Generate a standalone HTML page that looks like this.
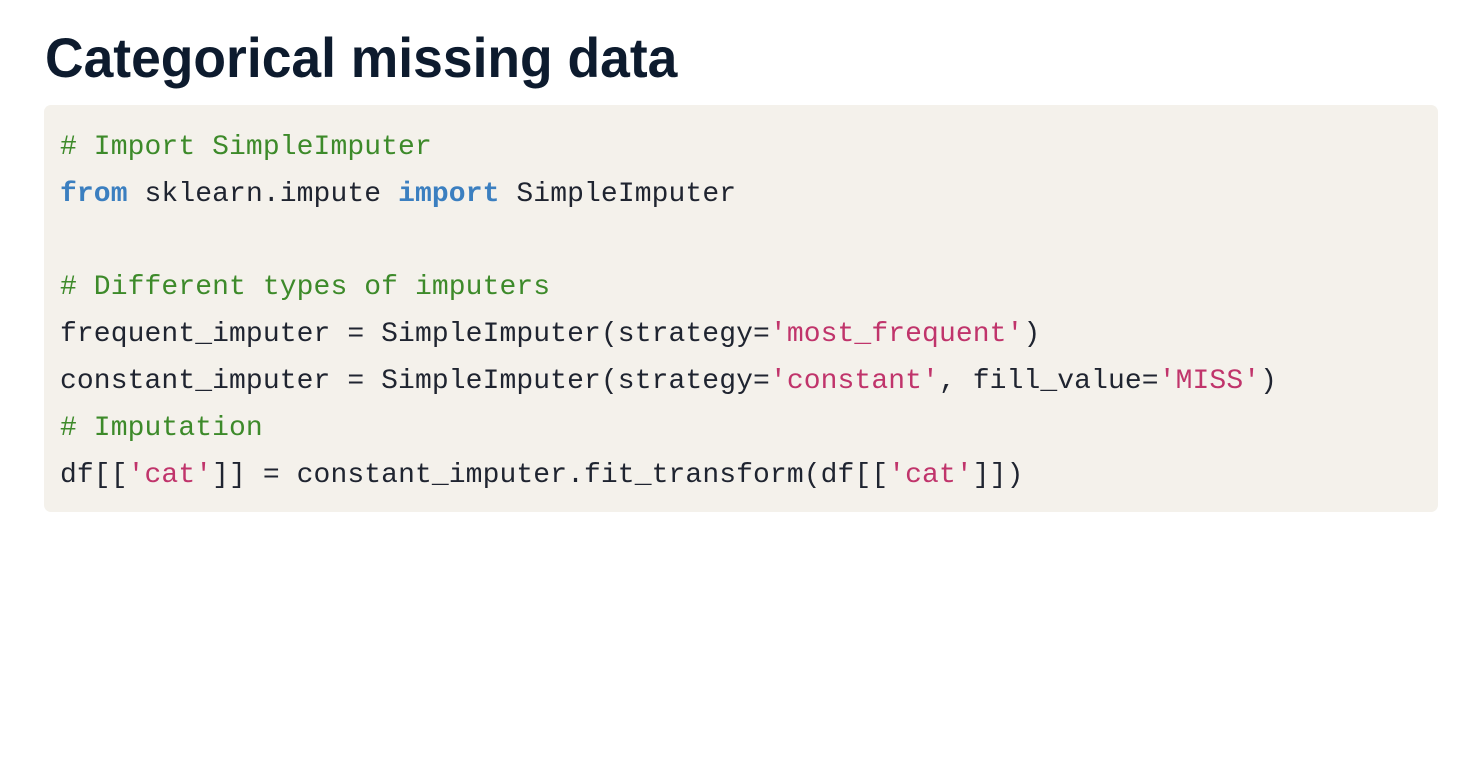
<!DOCTYPE html>
<html><head><meta charset="utf-8"><style>
body{margin:0;background:#fff;width:1480px;height:760px;overflow:hidden;}
h1{position:absolute;left:45px;top:23px;margin:0;font-family:"Liberation Sans",sans-serif;font-weight:bold;font-size:56px;line-height:70px;color:#0d1b2e;transform:scaleX(0.954);transform-origin:left;white-space:nowrap;}
.code{position:absolute;left:44px;top:105px;width:1394px;height:407px;background:#f4f1eb;border-radius:7px;}
pre{margin:0;position:absolute;left:60px;top:125px;font-family:"Liberation Mono",monospace;font-size:28px;line-height:46.8px;color:#1f2430;letter-spacing:0.1px;}
.c{color:#3d8a2a}.k{color:#3b7fc0;font-weight:bold}.s{color:#c0346b}
</style></head><body>
<h1>Categorical missing data</h1>
<div class="code"></div>
<pre><span class="c"># Import SimpleImputer</span>
<span class="k">from</span> sklearn.impute <span class="k">import</span> SimpleImputer

<span class="c"># Different types of imputers</span>
frequent_imputer = SimpleImputer(strategy=<span class="s">'most_frequent'</span>)
constant_imputer = SimpleImputer(strategy=<span class="s">'constant'</span>, fill_value=<span class="s">'MISS'</span>)
<span class="c"># Imputation</span>
df[[<span class="s">'cat'</span>]] = constant_imputer.fit_transform(df[[<span class="s">'cat'</span>]])</pre>
</body></html>
